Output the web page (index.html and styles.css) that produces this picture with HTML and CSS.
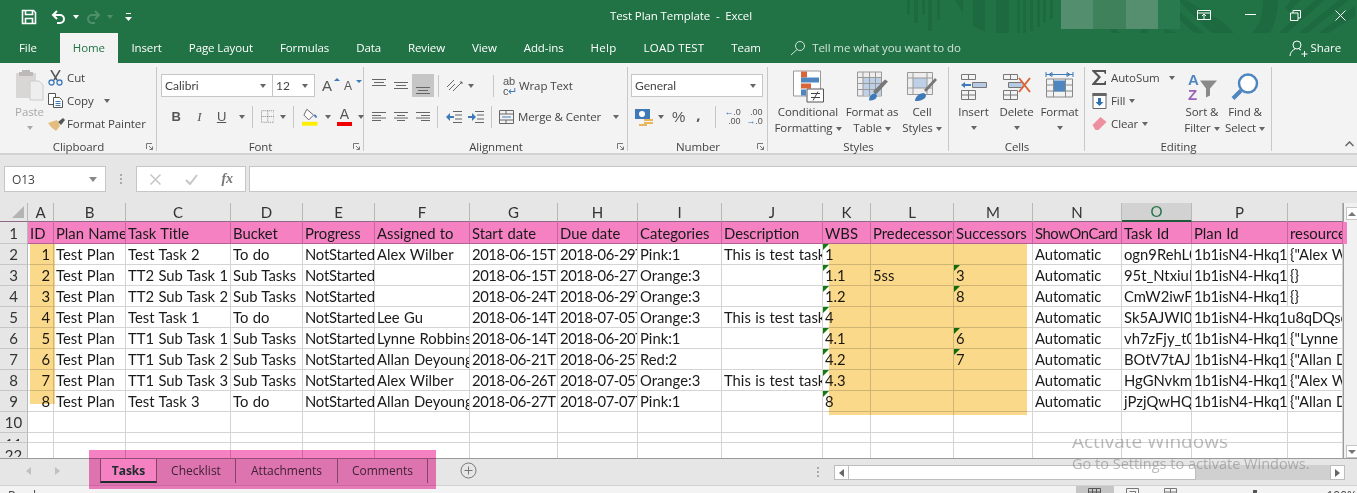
FILE: index.html
```html
<!DOCTYPE html>
<html lang="en">
<head>
    <meta charset="UTF-8">
    <title>Test Plan Template - Excel</title>
    <link rel="stylesheet" href="styles.css">
</head>
<body>
<div class="app">

    <!-- Title bar -->
    <div class="titlebar">
        <svg class="pattern" width="1357" height="63" viewBox="0 0 1357 63" fill="#1d6a40">
            <path d="M907 0h3v15h-3zM914 0h4v23h-4zM922 0h3v15h-3zM928 0h4v31h-4zM937 0h3v20h-3zM955 0l8 13V0zM973 0h12v32l-12-6zM996 0h13v36h-13zM1017 0h3v35h-3zM1023 0h3v33h-3zM1030 0h3v31h-3zM1037 0h3v27h-3zM1043 0h3v23h-3zM1050 0h3v17l-3 3z"/>
            <path d="M1110 28a19 12 0 0 0 38 0h-6a13 7 0 0 1-26 0z"/>
            <path d="M1163 28c6 12 18 22 28 23h58c16-2 29-26 29-51h-15c0 24-10 38-24 38l-15-15-38-23h-8l40 40h-6l-46-40h-8l44 40h-6z"/>
            <path d="M1291 0h10l-12 12-4-4zM1315 0h10l-44 38-4-4zM1339 0h10l-50 40-4-4zM1355 6v10l-34 22-4-4z"/>
        </svg>
        <div class="qat">
            <svg class="qat-save" width="16" height="16" viewBox="0 0 16 16" fill="none" stroke="#fff" stroke-width="1.6"><path d="M1.5 1.5h11l2 2v11h-13z"/><path d="M4.5 1.5v4h7v-4"/><path d="M4.5 14.5v-5h7v5" /></svg>
            <svg class="qat-undo" width="16" height="14" viewBox="0 0 16 14" fill="none" stroke="#fff" stroke-width="2"><path d="M6 1L2 5l4 4"/><path d="M2 5h7a4 4 0 0 1 0 8H6"/></svg>
            <span class="caret caret-white"></span>
            <svg class="qat-redo" width="16" height="14" viewBox="0 0 16 14" fill="none" stroke="#4f8f6b" stroke-width="2"><path d="M10 1l4 4-4 4"/><path d="M14 5H7a4 4 0 0 0 0 8h3"/></svg>
            <span class="caret caret-dim"></span>
            <svg class="qat-more" width="7" height="8" viewBox="0 0 7 8" fill="#fff"><path d="M1 0h5v1H1zM0 4h7L3.5 8z"/></svg>
        </div>
        <div class="doc-title">Test Plan Template&nbsp; -&nbsp; Excel</div>
        <div class="blur-blocks"><i class="b1"></i><i class="b2"></i><i class="b3"></i><i class="b4"></i></div>
        <div class="win-buttons">
            <svg width="14" height="11" viewBox="0 0 14 11" fill="none" stroke="#fff"><path d="M.5.500h13v9H.5zM.5 3h13"/><path d="M7 9V4M5 6l2-2 2 2"/></svg>
            <svg width="11" height="2" viewBox="0 0 11 2" fill="#fff"><path d="M0 0h11v1H0z"/></svg>
            <svg width="11" height="11" viewBox="0 0 11 11" fill="none" stroke="#fff"><path d="M.5 3h7.500v7.500H.5zM3 3V.5h7.500V8H8"/></svg>
            <svg width="11" height="11" viewBox="0 0 11 11" fill="none" stroke="#fff"><path d="M.5.500l10 10M10.500.500l-10 10"/></svg>
        </div>
    </div>

    <!-- Ribbon tabs -->
    <div class="tabs">
        <div class="tab tab-file">File</div>
        <div class="tab tab-active">Home</div>
        <div class="tab">Insert</div>
        <div class="tab">Page Layout</div>
        <div class="tab">Formulas</div>
        <div class="tab">Data</div>
        <div class="tab">Review</div>
        <div class="tab">View</div>
        <div class="tab">Add-ins</div>
        <div class="tab tab-help">Help</div>
        <div class="tab tab-load">LOAD TEST</div>
        <div class="tab">Team</div>
        <div class="tell-me">
            <svg width="16" height="16" viewBox="0 0 16 16" fill="none" stroke="#d3e3da"><circle cx="10" cy="6" r="4.500"/><path d="M7 9.500L1 15"/></svg>
            <span>Tell me what you want to do</span>
        </div>
        <div class="share">
            <svg width="19" height="17" viewBox="0 0 19 17" fill="none" stroke="#fff"><circle cx="8" cy="5" r="4"/><path d="M1 16c0-4 3-6 5-7M10 9l2 1M12.500 14h6M15.500 11v6"/></svg>
            <span>Share</span>
        </div>
    </div>

    <!-- Ribbon -->
    <div class="ribbon">

        <div class="group g-clipboard">
            <div class="group-body">
                <div class="paste">
                    <svg width="29" height="31" viewBox="0 0 29 31"><path d="M1 3h20v25H1z" fill="#d9d6d6"/><path d="M7 0h8v2h3v4H4V2h3z" fill="#bdb9b9"/><path d="M15 11h9l4 4v15H15z" fill="#eee" stroke="#ccc"/></svg>
                    <span class="muted">Paste</span>
                    <span class="caret caret-light"></span>
                </div>
                <div class="small-col">
                    <div class="small-btn"><svg width="15" height="16" viewBox="0 0 15 16" fill="none"><path d="M3 0l6 10M12 0L6 10" stroke="#555" stroke-width="1.500"/><circle cx="3.500" cy="12.500" r="2.500" stroke="#3f7ab8" stroke-width="1.300"/><circle cx="11.500" cy="12.500" r="2.500" stroke="#3f7ab8" stroke-width="1.300"/></svg><span>Cut</span></div>
                    <div class="small-btn"><svg width="15" height="15" viewBox="0 0 15 15" fill="#fff" stroke="#555"><path d="M.5.500h7v11h-7z"/><path d="M5.500 4.500h6l3 3v7h-9z"/><path d="M7.500 8.500h5M7.500 10.500h5M7.500 12.500h5" stroke="#3f7ab8"/></svg><span>Copy</span><span class="caret"></span></div>
                    <div class="small-btn"><svg class="ic-painter" width="17" height="14" viewBox="0 0 17 14"><path d="M0 6l9-3 3 6-4 5C5 12 2 9 0 6z" fill="#e4bd7e"/><path d="M10 5l5-4 2 2-4 5z" fill="#555"/></svg><span>Format Painter</span></div>
                </div>
            </div>
            <div class="group-label">Clipboard<svg class="launcher" width="7" height="7" viewBox="0 0 7 7" fill="none" stroke="#777"><path d="M.500 6V.500H6M3 3l3.500 3.500M6.500 3.500v3h-3"/></svg></div>
        </div>

        <div class="group g-font">
            <div class="group-body col">
                <div class="row r-top">
                    <div class="select select-font">Calibri<span class="caret"></span></div>
                    <div class="select select-size">12<span class="caret"></span></div>
                    <span class="grow-a">A<i class="tip"></i></span>
                    <span class="grow-a small-a">A<i class="tip tip-down"></i></span>
                </div>
                <div class="row r-bottom">
                    <b class="fmt fmt-b">B</b>
                    <i class="fmt fmt-i">I</i>
                    <u class="fmt fmt-u">U</u>
                    <span class="caret"></span>
                    <span class="sep sep-a"></span>
                    <svg class="ic-border" width="14" height="13" viewBox="0 0 14 13" fill="none" stroke="#888" stroke-dasharray="1 1"><path d="M.5.500h13v12H.5zM7 .5v12M.5 6.500h13"/></svg>
                    <span class="caret"></span>
                    <span class="sep sep-b"></span>
                    <svg class="ic-fill" width="17" height="18" viewBox="0 0 17 18"><path d="M5 1l7 6-5 5-5-5z" fill="#fff" stroke="#666"/><path d="M13 6c2 1 3 3 2 4-2 0-3-2-2-4z" fill="#3f7ab8"/><path d="M0 14h16v4H0z" fill="#ffee00"/></svg>
                    <span class="caret"></span>
                    <span class="color-a">A</span>
                    <span class="caret"></span>
                </div>
            </div>
            <div class="group-label">Font<svg class="launcher" width="7" height="7" viewBox="0 0 7 7" fill="none" stroke="#777"><path d="M.500 6V.500H6M3 3l3.500 3.500M6.500 3.500v3h-3"/></svg></div>
        </div>

        <div class="group g-align">
            <div class="group-body col">
                <div class="row r-top">
                    <svg class="al" width="14" height="7" viewBox="0 0 14 7" stroke="#666"><path d="M0 .5h14M2 3.500h10M0 6.500h14" /></svg>
                    <svg class="al al-mid" width="14" height="7" viewBox="0 0 14 7" stroke="#666"><path d="M0 .5h14M2 3.500h10M0 6.500h14" /></svg>
                    <span class="al-on"><svg width="14" height="7" viewBox="0 0 14 7" stroke="#666"><path d="M0 .5h14M2 3.500h10M0 6.500h14" /></svg></span>
                    <span class="sep sep-c"></span>
                    <svg class="ic-orient" width="17" height="15" viewBox="0 0 17 15" fill="none" stroke="#666"><path d="M1 9l7-7M3 12l6-6M7 13L16 4M14 4h2v2" /></svg>
                    <span class="caret"></span>
                    <span class="sep sep-d"></span>
                    <span class="wrap-ic">ab<br>c<em>↵</em></span>
                    <span class="btn-text">Wrap Text</span>
                </div>
                <div class="row r-bottom">
                    <svg class="al al-lo" width="14" height="9" viewBox="0 0 14 9" stroke="#666"><path d="M0 .5h14M0 3.500h9M0 6h14M0 8.500h9"/></svg>
                    <svg class="al al-cn" width="14" height="9" viewBox="0 0 14 9" stroke="#666"><path d="M0 .5h14M3 3.500h8M0 6h14M3 8.500h8"/></svg>
                    <svg class="al al-rt" width="14" height="9" viewBox="0 0 14 9" stroke="#666"><path d="M0 .5h14M5 3.500h9M0 6h14M5 8.500h9"/></svg>
                    <span class="sep sep-e"></span>
                    <svg class="ic-out" width="16" height="12" viewBox="0 0 16 12"><path d="M7 .5h9M9 4h7M9 8h7M7 11.500h9" stroke="#666"/><path d="M0 6l4-4v3h4v2H4v3z" fill="#3f7ab8"/></svg>
                    <svg class="ic-in" width="16" height="12" viewBox="0 0 16 12"><path d="M7 .5h9M9 4h7M9 8h7M7 11.500h9" stroke="#666"/><path d="M8 6L4 2v3H0v2h4v3z" fill="#3f7ab8"/></svg>
                    <span class="sep sep-f"></span>
                    <svg class="ic-merge" width="15" height="14" viewBox="0 0 15 14" fill="none" stroke="#666"><path d="M.5.500h14v13H.5zM.5 4h14M.5 10h14M7 .5V4M7 10v3.500"/><path d="M3 7h9" stroke="#3f7ab8"/></svg>
                    <span class="btn-text">Merge &amp; Center</span>
                    <span class="caret caret-merge"></span>
                </div>
            </div>
            <div class="group-label">Alignment<svg class="launcher" width="7" height="7" viewBox="0 0 7 7" fill="none" stroke="#777"><path d="M.500 6V.500H6M3 3l3.500 3.500M6.500 3.500v3h-3"/></svg></div>
        </div>

        <div class="group g-number">
            <div class="group-body col">
                <div class="row r-top">
                    <div class="select select-format">General<span class="caret"></span></div>
                </div>
                <div class="row r-bottom">
                    <svg class="ic-money" width="18" height="18" viewBox="0 0 18 18"><path d="M0 1h15v10H0z" fill="#3f7ab8"/><circle cx="7" cy="6" r="3" fill="#fff"/><path d="M9 11h9v2H9zM9 14h9v2H9z" fill="#e8b65c"/><path d="M4 16h8v2H4z" fill="#e8b65c"/></svg>
                    <span class="caret"></span>
                    <span class="pct">%</span>
                    <span class="comma">,</span>
                    <span class="sep sep-g"></span>
                    <span class="dec dec-1"><em>←</em>.0<br>.00</span>
                    <span class="dec dec-2">.00<br><em>→</em>.0</span>
                </div>
            </div>
            <div class="group-label">Number<svg class="launcher" width="7" height="7" viewBox="0 0 7 7" fill="none" stroke="#777"><path d="M.500 6V.500H6M3 3l3.500 3.500M6.500 3.500v3h-3"/></svg></div>
        </div>

        <div class="group g-styles">
            <div class="group-body">
                <div class="big big-cond">
                    <svg width="31" height="32" viewBox="0 0 31 32"><path d="M.5.500h27v25H.5z" fill="#fff" stroke="#999"/><path d="M8 1h6v6H8z" fill="#d9653b"/><path d="M8 7h18v5H8z" fill="#4f86c0"/><path d="M8 13h10v5H8z" fill="#d9653b"/><path d="M8 19h5v6H8z" fill="#4f86c0"/><path d="M14 18.500h16.500v13H14z" fill="#fff" stroke="#555"/><path d="M18 23h9M18 27h9M25 21l-5 9" stroke="#444" fill="none"/></svg>
                    <span>Conditional</span>
                    <span>Formatting<i class="caret"></i></span>
                </div>
                <div class="big big-table">
                    <svg width="31" height="30" viewBox="0 0 31 30"><path d="M.5.500h24v24H.5z" fill="#eee" stroke="#999"/><path d="M6 6h18v18H6z" fill="#bdd0e8"/><path d="M6 .5v24M12.500 .5v24M18.500 .5v24M.5 6h24M.5 12h24M.5 18h24" stroke="#999" fill="none"/><path d="M16 20L28 8l3 2-12 13z" fill="#777"/><path d="M12 29c0-5 3-7 6-7l2 2c0 3-3 5-8 5z" fill="#3f7ab8"/></svg>
                    <span>Format as</span>
                    <span>Table<i class="caret"></i></span>
                </div>
                <div class="big big-cell">
                    <svg width="30" height="29" viewBox="0 0 30 29"><path d="M.5.500h25v22H.5z" fill="#eee" stroke="#999"/><path d="M6 6h14v10H6z" fill="#bdd0e8"/><path d="M.5 6h25M.5 16h25M6 .5v22M20 .5v22" stroke="#999" fill="none"/><path d="M17 18L28 6l2 2-11 12z" fill="#777"/><path d="M8 29c0-4 4-8 9-8l2 2c0 4-5 6-11 6z" fill="#3f7ab8"/></svg>
                    <span>Cell</span>
                    <span>Styles<i class="caret"></i></span>
                </div>
            </div>
            <div class="group-label">Styles</div>
        </div>

        <div class="group g-cells">
            <div class="group-body">
                <div class="big big-cellbtn">
                    <svg width="27" height="27" viewBox="0 0 27 27" fill="none"><path d="M1.500 1.500h14v5h-14zM8.500 1.500v5M1.500 17.500h14v9h-14zM1.500 22h14M8.500 17.500v9" stroke="#777"/><path d="M12.500 9.500h14v5h-14zM19.500 9.500v5" stroke="#777" /><path d="M13 10h13v4H13z" fill="#b5cbe4"/><path d="M1 12l4-3v2h6v2H5v2z" fill="#3f7ab8"/></svg>
                    <span>Insert</span>
                    <i class="caret caret-alone"></i>
                </div>
                <div class="big big-cellbtn">
                    <svg width="30" height="27" viewBox="0 0 30 27" fill="none"><path d="M1.500 1.500h14v5h-14zM8.500 1.500v5M1.500 17.500h14v9h-14zM1.500 22h14M8.500 17.500v9M6.500 9.500h14v5h-14z" stroke="#777"/><path d="M7 10h12l3 2-3 2H7z" fill="#b5cbe4"/><path d="M17 5l11 14M28 5L17 19" stroke="#d9653b" stroke-width="2"/></svg>
                    <span>Delete</span>
                    <i class="caret caret-alone"></i>
                </div>
                <div class="big big-cellbtn">
                    <svg width="29" height="30" viewBox="0 0 29 30" fill="none"><path d="M1 3h27M1 .5v5M28 .5v5M4 3l3-2v4zM25 3l-3-2v4z" stroke="#3f7ab8"/><path d="M1.500 7.500h26v18h-26z" stroke="#888"/><path d="M1.500 13.500h26M1.500 19.500h26M8.500 7.500v18M20.500 7.500v18" stroke="#888"/><path d="M9 9h11v11H9z" fill="#4f86c0"/></svg>
                    <span>Format</span>
                    <i class="caret caret-alone"></i>
                </div>
            </div>
            <div class="group-label">Cells</div>
        </div>

        <div class="group g-editing">
            <div class="group-body">
                <div class="small-col edit-col">
                    <div class="small-btn"><svg width="15" height="15" viewBox="0 0 15 15" fill="#555"><path d="M0 0h14v4h-1l-1-2H4l5 5-5 6h8l1-2h1v4H0v-1l6-7-6-6z"/></svg><span>AutoSum</span><span class="caret caret-sum"></span></div>
                    <div class="small-btn"><svg width="15" height="16" viewBox="0 0 14 16"><path d="M.5 .5h13v15H.5z" fill="#fff" stroke="#666"/><path d="M0 0h14v3H0z" fill="#666"/><path d="M5.500 5h3v4H11l-4 4-4-4h2.500z" fill="#2f6fb3"/></svg><span>Fill</span><span class="caret"></span></div>
                    <div class="small-btn"><svg width="15" height="13" viewBox="0 0 14 13"><path d="M0 8l8-8 6 5-8 8H3z" fill="#ee8f9f"/></svg><span>Clear</span><span class="caret"></span></div>
                </div>
                <div class="big big-sort">
                    <svg width="31" height="30" viewBox="0 0 31 30"><text x="1" y="13" class="az az-a">A</text><text x="1" y="28" class="az az-z">Z</text><path d="M13 9h17l-7 8v7l-4 2v-9z" fill="#8a8a8a"/></svg>
                    <span>Sort &amp;</span>
                    <span>Filter<i class="caret"></i></span>
                </div>
                <div class="big big-find">
                    <svg width="28" height="28" viewBox="0 0 28 28" fill="none"><circle cx="17" cy="11" r="9" stroke="#4f86c0" stroke-width="2.500" fill="#fff"/><path d="M10 18l-8 8" stroke="#4f86c0" stroke-width="4"/></svg>
                    <span>Find &amp;</span>
                    <span>Select<i class="caret"></i></span>
                </div>
            </div>
            <div class="group-label">Editing</div>
        </div>

        <svg class="collapse" width="9" height="6" viewBox="0 0 9 6" fill="none" stroke="#666" stroke-width="1.500"><path d="M.5 5l4-4 4 4"/></svg>
    </div>

    <!-- Formula bar -->
    <div class="formula-bar">
        <div class="name-box">O13<span class="caret caret-name"></span></div>
        <span class="fb-dots"></span>
        <div class="fb-buttons">
            <svg width="11" height="11" viewBox="0 0 11 11" stroke="#c6c6c6" stroke-width="1.500"><path d="M.5.500l10 10M10.500.500l-10 10"/></svg>
            <svg width="13" height="11" viewBox="0 0 13 11" fill="none" stroke="#c6c6c6" stroke-width="2"><path d="M1 6l4 4 7-9"/></svg>
            <span class="fx">fx</span>
        </div>
        <div class="fb-input"></div>
    </div>

    <!-- Sheet -->
    <div class="sheet">
        <table class="grid">
            <colgroup>
                <col class="c-rh"><col class="c-a"><col class="c-b"><col class="c-c"><col class="c-d"><col class="c-e"><col class="c-f"><col class="c-g"><col class="c-h"><col class="c-i"><col class="c-j"><col class="c-k"><col class="c-l"><col class="c-m"><col class="c-n"><col class="c-o"><col class="c-p"><col class="c-q">
            </colgroup>
            <tr class="letters">
                <th class="corner"></th><th>A</th><th>B</th><th>C</th><th>D</th><th>E</th><th>F</th><th>G</th><th>H</th><th>I</th><th>J</th><th>K</th><th>L</th><th>M</th><th>N</th><th class="col-on">O</th><th>P</th><th></th>
            </tr>
            <tr class="head">
                <th>1</th><td>ID</td><td>Plan Name</td><td>Task Title</td><td>Bucket</td><td>Progress</td><td>Assigned to</td><td>Start date</td><td>Due date</td><td>Categories</td><td>Description</td><td>WBS</td><td>Predecessors</td><td>Successors</td><td>ShowOnCard</td><td>Task Id</td><td>Plan Id</td><td>resources</td>
            </tr>
            <tr>
                <th>2</th><td class="num">1</td><td>Test Plan</td><td>Test Task 2</td><td>To do</td><td>NotStarted</td><td>Alex Wilber</td><td>2018-06-15T12:00</td><td>2018-06-29T12:00</td><td>Pink:1</td><td>This is test task</td><td class="flag">1</td><td></td><td></td><td>Automatic</td><td>ogn9RehL0abc</td><td>1b1isN4-Hkq1</td><td>{"Alex Wilber"}</td>
            </tr>
            <tr>
                <th>3</th><td class="num">2</td><td>Test Plan</td><td>TT2 Sub Task 1</td><td>Sub Tasks</td><td>NotStarted</td><td></td><td>2018-06-15T12:00</td><td>2018-06-27T12:00</td><td>Orange:3</td><td></td><td class="flag">1.1</td><td>5ss</td><td class="flag">3</td><td>Automatic</td><td>95t_NtxiuBabc</td><td>1b1isN4-Hkq1</td><td>{}</td>
            </tr>
            <tr>
                <th>4</th><td class="num">3</td><td>Test Plan</td><td>TT2 Sub Task 2</td><td>Sub Tasks</td><td>NotStarted</td><td></td><td>2018-06-24T12:00</td><td>2018-06-29T12:00</td><td>Orange:3</td><td></td><td class="flag">1.2</td><td></td><td class="flag">8</td><td>Automatic</td><td>CmW2iwFAabc</td><td>1b1isN4-Hkq1</td><td>{}</td>
            </tr>
            <tr>
                <th>5</th><td class="num">4</td><td>Test Plan</td><td>Test Task 1</td><td>To do</td><td>NotStarted</td><td>Lee Gu</td><td>2018-06-14T12:00</td><td>2018-07-05T12:00</td><td>Orange:3</td><td>This is test task</td><td class="flag">4</td><td></td><td></td><td>Automatic</td><td>Sk5AJWI0kabc</td><td colspan="2">1b1isN4-Hkq1u8qDQsc</td>
            </tr>
            <tr>
                <th>6</th><td class="num">5</td><td>Test Plan</td><td>TT1 Sub Task 1</td><td>Sub Tasks</td><td>NotStarted</td><td>Lynne Robbins</td><td>2018-06-14T12:00</td><td>2018-06-20T12:00</td><td>Pink:1</td><td></td><td class="flag">4.1</td><td></td><td class="flag">6</td><td>Automatic</td><td>vh7zFjy_t0abc</td><td>1b1isN4-Hkq1</td><td>{"Lynne</td>
            </tr>
            <tr>
                <th>7</th><td class="num">6</td><td>Test Plan</td><td>TT1 Sub Task 2</td><td>Sub Tasks</td><td>NotStarted</td><td>Allan Deyoung</td><td>2018-06-21T12:00</td><td>2018-06-25T12:00</td><td>Red:2</td><td></td><td class="flag">4.2</td><td></td><td class="flag">7</td><td>Automatic</td><td>BOtV7tAJMabc</td><td>1b1isN4-Hkq1</td><td>{"Allan De"}</td>
            </tr>
            <tr>
                <th>8</th><td class="num">7</td><td>Test Plan</td><td>TT1 Sub Task 3</td><td>Sub Tasks</td><td>NotStarted</td><td>Alex Wilber</td><td>2018-06-26T12:00</td><td>2018-07-05T12:00</td><td>Orange:3</td><td>This is test task</td><td class="flag">4.3</td><td></td><td></td><td>Automatic</td><td>HgGNvkm0abc</td><td>1b1isN4-Hkq1</td><td>{"Alex Wilber"}</td>
            </tr>
            <tr>
                <th>9</th><td class="num">8</td><td>Test Plan</td><td>Test Task 3</td><td>To do</td><td>NotStarted</td><td>Allan Deyoung</td><td>2018-06-27T12:00</td><td>2018-07-07T12:00</td><td>Pink:1</td><td></td><td class="flag">8</td><td></td><td></td><td>Automatic</td><td>jPzjQwHQ_abc</td><td>1b1isN4-Hkq1</td><td>{"Allan De"}</td>
            </tr>
            <tr>
                <th>10</th><td></td><td></td><td></td><td></td><td></td><td></td><td></td><td></td><td></td><td></td><td></td><td></td><td></td><td></td><td></td><td></td><td></td>
            </tr>
            <tr class="row-thin">
                <th><span>11</span></th><td></td><td></td><td></td><td></td><td></td><td></td><td></td><td></td><td></td><td></td><td></td><td></td><td></td><td></td><td></td><td></td><td></td>
            </tr>
            <tr class="row-cut">
                <th><span>22</span></th><td></td><td></td><td></td><td></td><td></td><td></td><td></td><td></td><td></td><td></td><td></td><td></td><td></td><td></td><td></td><td></td><td></td>
            </tr>
        </table>
        <div class="vscroll">
            <span class="vs-btn"><i class="tri-up"></i></span>
            <span class="vs-btn"><i class="tri-down"></i></span>
        </div>
        <span class="head-tail"></span>
    </div>

    <!-- Sheet tabs and horizontal scrollbar -->
    <div class="sheet-bar">
        <div class="sheet-nav"><i class="tri-left"></i><i class="tri-right"></i></div>
        <div class="sheet-tab sheet-tab-on">Tasks</div>
        <div class="sheet-tab st-check">Checklist</div>
        <div class="sheet-tab st-attach">Attachments</div>
        <div class="sheet-tab st-comments">Comments</div>
        <svg class="add-sheet" width="17" height="17" viewBox="0 0 17 17" fill="none" stroke="#777"><circle cx="8.500" cy="8.500" r="7.500"/><path d="M8.500 4.500v8M4.500 8.500h8"/></svg>
        <span class="hs-dots"></span>
        <div class="hscroll">
            <span class="hs-btn"><i class="tri-left dark"></i></span>
            <span class="hs-thumb"></span>
            <span class="hs-track"></span>
            <span class="hs-btn"><i class="tri-right dark"></i></span>
        </div>
    </div>

    <!-- Status bar, cut by the bottom of the window -->
    <div class="status">
        <span class="ready">Ready</span>
        <span class="view view-on"><svg width="13" height="8" viewBox="0 0 13 8" fill="none" stroke="#555"><path d="M.5 8V.5h12V8M4.500 .5V8M8.500 .5V8M.5 4h12"/></svg></span>
        <span class="view"><svg width="13" height="8" viewBox="0 0 13 8" fill="none" stroke="#777"><path d="M.5 8V.5h12V8M3.500 3.500h6V8"/></svg></span>
        <span class="view"><svg width="13" height="8" viewBox="0 0 13 8" fill="none" stroke="#777"><path d="M.5 8V.5h12V8M6.500 .5V8M.5 4h12"/></svg></span>
        <span class="zoom-knob"></span>
        <span class="zoom-pct">100%</span>
    </div>

    <!-- Highlights painted on the screenshot -->
    <div class="mark mark-id"></div>
    <div class="mark mark-links"></div>
    <div class="mark-tabs"></div>

    <div class="activate">
        <div class="act-1">Activate Windows</div>
        <div class="act-2">Go to Settings to activate Windows.</div>
    </div>
</div>
</body>
</html>
```

FILE: styles.css
```css
* {
    box-sizing: border-box;
}

html, body {
    margin: 0;
    padding: 0;
}

body {
    font-family: 'Open Sans', 'Noto Sans', sans-serif;
    font-size: 11.5px;
    letter-spacing: -0.1px;
    color: #333;
    background-color: #e6e6e6;
}

.app {
    position: relative;
    width: 1357px;
    height: 493px;
    overflow: hidden;
    display: flex;
    flex-direction: column;
}

/* small dropdown arrow, used everywhere */
.caret {
    display: inline-block;
    width: 0;
    height: 0;
    border-left: 3.5px solid transparent;
    border-right: 3.5px solid transparent;
    border-top: 4px solid #666;
    vertical-align: middle;
}

.caret-white { border-top-color: #fff; }
.caret-dim { border-top-color: #4f8f6b; }
.caret-light { border-top-color: #aaa; }

/* Title bar */
.titlebar {
    position: relative;
    height: 33px;
    flex: none;
    background-color: #217346;
    display: flex;
    align-items: center;
    color: #fff;
}

.pattern {
    position: absolute;
    top: 0;
    left: 0;
}

.qat {
    position: relative;
    display: flex;
    align-items: center;
    padding-left: 21px;
    width: 400px;
    height: 31px;
}

.qat-undo { margin-left: 14px; }
.qat .caret-white { margin-left: 6px; }
.qat-redo { margin-left: 6px; }
.qat .caret-dim { margin-left: 6px; }
.qat-more { margin-left: 12px; }

.doc-title {
    position: relative;
    width: 562px;
    text-align: center;
    margin-top: -3px;
}

.blur-blocks {
    position: relative;
    display: flex;
    margin-left: 99px;
    align-self: flex-start;
    height: 29px;
}

.blur-blocks i {
    display: block;
    height: 29px;
}

.b1 { width: 32px; background-color: #538f6e; }
.b2 { width: 33px; background-color: #3f815b; }
.b3 { width: 32px; background-color: #568f70; }
.b4 { width: 22px; background-color: #2a7a4f; }

.win-buttons {
    position: relative;
    display: flex;
    align-items: center;
    gap: 34px;
    margin-left: 17px;
    margin-top: -3px;
}

/* Ribbon tabs */
.tabs {
    position: relative;
    height: 30px;
    flex: none;
    background-color: #217346;
    display: flex;
    color: #fff;
    line-height: 30px;
}

.tab {
    padding: 0 13.5px;
}

.tab-file {
    padding: 0 23px 0 19px;
}

.tab-active {
    background-color: #f3f3f3;
    color: #217346;
    padding: 0 13px;
}

.tab-help {
    letter-spacing: 0.3px;
}

.tab-load {
    letter-spacing: 0.2px;
}

.tell-me {
    display: flex;
    align-items: center;
    gap: 6px;
    margin-left: 16px;
    color: #d3e3da;
}

.share {
    display: flex;
    align-items: center;
    gap: 3px;
    margin-left: auto;
    padding-right: 16px;
}

/* Ribbon */
.ribbon {
    position: relative;
    height: 92px;
    flex: none;
    background-color: #f3f3f3;
    border-bottom: 2px solid #d2d2d2;
    display: flex;
    color: #444;
}

/* the group divider stops above the bottom of the group */
.group {
    display: flex;
    flex-direction: column;
    flex: none;
    height: 87px;
    margin-top: 4px;
    background: linear-gradient(#c8c8c8, #c8c8c8) right top / 1px 84px no-repeat;
}

.g-clipboard { width: 157px; }
.g-font { width: 207px; }
.g-align { width: 264px; }
.g-number { width: 140px; }
.g-styles { width: 181px; }
.g-cells { width: 136px; }
.g-editing { width: 187px; }

.group-body {
    flex: 1;
    display: flex;
    min-height: 0;
}

.group-body.col {
    flex-direction: column;
    padding-top: 7px;
}

.group-label {
    position: relative;
    height: 17px;
    line-height: 19px;
    text-align: center;
    color: #444;
}

.launcher {
    position: absolute;
    right: 4px;
    top: 6px;
}

.muted { color: #a8a8a8; }

.paste {
    width: 48px;
    padding-left: 11px;
    padding-top: 3px;
    display: flex;
    flex-direction: column;
    align-items: center;
}

.paste .muted {
    margin-top: 3px;
}

.paste .caret {
    margin-top: 7px;
}

.small-col {
    display: flex;
    flex-direction: column;
    margin-top: -1px;
}

.small-btn {
    display: flex;
    align-items: center;
    gap: 4px;
    height: 23px;
    white-space: nowrap;
}

.small-btn svg {
    flex: none;
}

.ic-painter {
    margin-right: -2px;
}

.small-btn .caret {
    margin-left: 6px;
}

.row {
    display: flex;
    align-items: center;
    height: 23px;
}

.r-bottom {
    margin-top: 8px;
}

.select {
    display: flex;
    align-items: center;
    justify-content: space-between;
    height: 23px;
    background-color: #fff;
    border: 1px solid #c6c6c6;
    padding: 0 6px 0 3px;
    color: #444;
    font-size: 12px;
    letter-spacing: 0;
}

.select-font {
    width: 112px;
    margin-left: 4px;
    font-family: 'Lato', sans-serif;
}

.select-size {
    width: 43px;
    margin-left: -1px;
    font-family: 'Lato', sans-serif;
}

.grow-a {
    position: relative;
    margin-left: 7px;
    width: 16px;
    font-size: 15px;
    font-family: 'Liberation Sans', sans-serif;
    color: #555;
}

.small-a {
    margin-left: 6px;
    font-size: 12px;
}

.tip {
    position: absolute;
    top: 1px;
    right: -2px;
    border-left: 3px solid transparent;
    border-right: 3px solid transparent;
    border-bottom: 3px solid #3f7ab8;
}

.tip-down {
    border-bottom: none;
    border-top: 3px solid #3f7ab8;
}

.fmt {
    font-family: 'Liberation Serif', serif;
    font-size: 13px;
    color: #555;
    width: 23px;
    text-align: center;
}

.fmt-b { font-family: 'Liberation Sans', sans-serif; margin-left: 8px; }
.fmt-i { margin-left: 1px; }
.fmt-u { font-family: 'Liberation Sans', sans-serif; }

.g-font .r-bottom .caret { margin-left: 6px; }

.sep {
    display: block;
    width: 1px;
    height: 22px;
    background-color: #c6c6c6;
}

.sep-a { margin-left: 7px; }
.ic-border { margin-left: 8px; }
.sep-b { margin-left: 7px; }
.ic-fill { margin-left: 8px; }

.color-a {
    margin-left: 6px;
    width: 16px;
    height: 18px;
    line-height: 13px;
    text-align: center;
    font-family: 'Liberation Sans', sans-serif;
    font-size: 14px;
    color: #555;
    border-bottom: 4px solid #f00000;
}

.al { margin-left: 8px; flex: none; }
.al-mid { margin-left: 8px; }
.g-align .r-top .al:first-child { margin-top: -7px; }
.al-on {
    display: flex;
    align-items: flex-end;
    justify-content: center;
    width: 22px;
    height: 23px;
    margin-left: 4px;
    padding-bottom: 3px;
    background-color: #c6c6c6;
}

.sep-c { margin-left: 4px; margin-right: 7px; }
.ic-orient + .caret { margin-left: 5px; }
.sep-d { margin-left: 19px; margin-right: 9px; }

.wrap-ic {
    width: 13px;
    font-family: 'Liberation Sans', sans-serif;
    font-size: 11px;
    line-height: 10px;
    color: #555;
}

.wrap-ic em {
    font-style: normal;
    color: #3f7ab8;
}

.btn-text {
    margin-left: 4px;
    white-space: nowrap;
}

.wrap-ic + .btn-text {
    margin-left: 3px;
}

.g-align .r-bottom .al { margin-left: 8px; }
.al-cn { margin-left: 8px !important; }
.al-rt { margin-left: 8px !important; }
.sep-e { margin-left: 7px; margin-right: 8px; }
.ic-in { margin-left: 6px; }
.sep-f { margin-left: 7px; margin-right: 7px; }
.ic-merge + .btn-text { margin-left: 4px; }
.caret-merge { margin-left: 12px; }

.select-format {
    width: 132px;
    margin-left: 3px;
    font-family: 'Lato', sans-serif;
}

.ic-money { margin-left: 7px; }
.g-number .r-bottom .caret { margin-left: 5px; }

.pct {
    margin-left: 8px;
    font-size: 15px;
    color: #555;
    font-family: 'Liberation Sans', sans-serif;
}

.comma {
    margin-left: 11px;
    font-size: 15px;
    font-weight: bold;
    color: #555;
    margin-top: -6px;
}

.sep-g { margin-left: 15px; }

.dec {
    width: 16px;
    margin-left: 8px;
    font-family: 'Liberation Sans', sans-serif;
    font-size: 9px;
    line-height: 9px;
    text-align: right;
    color: #555;
}

.dec em {
    font-style: normal;
    color: #2f6fb3;
    font-weight: bold;
}

.dec-2 { margin-left: 6px; }

/* big ribbon buttons: icon on top, one or two lines of text under it */
.big {
    display: flex;
    flex-direction: column;
    align-items: center;
    line-height: 16px;
    white-space: nowrap;
    padding-top: 3px;
    flex: none;
}

.big svg {
    flex: none;
    height: 33px;
    margin-bottom: 1px;
}

.big .caret {
    margin-left: 3px;
}

.big .caret-alone {
    margin: 6px 0 0;
}

.big-cond { width: 78px; margin-left: 1px; }
.big-table { width: 50px; }
.big-cell { width: 50px; }
.big-cellbtn { width: 43px; }
.g-cells .group-body { padding-left: 3px; }

.edit-col {
    width: 92px;
    padding-left: 7px;
}

.edit-col .small-btn .caret {
    margin-left: 0;
}

.edit-col .small-btn .caret-sum {
    margin-left: 5px;
}

.big-sort { width: 42px; margin-left: 4px; }
.big-find { width: 44px; }

.az {
    font-family: 'Liberation Sans', sans-serif;
    font-size: 15px;
    font-weight: bold;
}

.az-a { fill: #4f86c0; }
.az-z { fill: #9a63b8; }

.collapse {
    position: absolute;
    right: 3px;
    bottom: 6px;
}

/* Formula bar */
.formula-bar {
    height: 48px;
    flex: none;
    background-color: #e6e6e6;
    display: flex;
    align-items: flex-start;
    padding: 11px 0 0 4px;
}

.name-box {
    display: flex;
    align-items: center;
    justify-content: space-between;
    width: 102px;
    height: 26px;
    background-color: #fff;
    border: 1px solid #c6c6c6;
    padding: 0 8px 0 7px;
    font-size: 12px;
    color: #444;
}

.caret-name {
    border-left-width: 4px;
    border-right-width: 4px;
    border-top-width: 5px;
    border-top-color: #888;
}

.fb-dots {
    width: 2px;
    height: 10px;
    margin: 8px 14px 0 14px;
    background-image: linear-gradient(#aaa 2px, transparent 2px);
    background-size: 2px 4px;
}

.fb-buttons {
    display: flex;
    align-items: center;
    justify-content: space-between;
    width: 110px;
    height: 26px;
    padding: 0 12px 0 13px;
    background-color: #fff;
    border: 1px solid #c6c6c6;
}

.fx {
    font-family: 'Liberation Serif', serif;
    font-style: italic;
    font-weight: bold;
    font-size: 14px;
    color: #777;
}

.fb-input {
    flex: 1;
    height: 26px;
    margin-left: 3px;
    background-color: #fff;
    border: 1px solid #c6c6c6;
    border-right: none;
}

/* Sheet */
.sheet {
    position: relative;
    height: 255px;
    flex: none;
    display: flex;
    overflow: hidden;
    background-color: #fff;
}

.grid {
    table-layout: fixed;
    border-collapse: separate;
    border-spacing: 0;
    width: 1343px;
    flex: none;
    font-family: 'Lato', sans-serif;
    font-size: 14.8px;
    letter-spacing: 0;
    word-spacing: 0.6px;
    color: #1a1a1a;
    background-color: #fff;
    border-right: 1px solid #9a9a9a;
}

.c-rh { width: 28px; }
.c-a { width: 26px; }
.c-b { width: 72px; }
.c-c { width: 105px; }
.c-d { width: 72px; }
.c-e { width: 72px; }
.c-f { width: 95px; }
.c-g { width: 88px; }
.c-h { width: 80px; }
.c-i { width: 84px; }
.c-j { width: 101px; }
.c-k { width: 48px; }
.c-l { width: 83px; }
.c-m { width: 79px; }
.c-n { width: 89px; }
.c-o { width: 70px; }
.c-p { width: 96px; }
.c-q { width: 55px; }

.grid tr {
    height: 21px;
}

.grid td {
    position: relative;
    height: 21px;
    padding: 0 0 0 2px;
    overflow: hidden;
    white-space: nowrap;
    border-right: 1px solid #d4d4d4;
    border-bottom: 1px solid #d4d4d4;
}

/* Lato digits and caps run wider than the sheet's own font */
.grid td:nth-child(6) {
    letter-spacing: -0.2px;
}

.grid td:nth-child(8),
.grid td:nth-child(9) {
    letter-spacing: -0.45px;
}

.grid td:nth-child(15) {
    letter-spacing: -0.1px;
}

.grid td:nth-child(17) {
    letter-spacing: -0.2px;
}

.grid .head td {
    letter-spacing: 0;
}

.grid .head td:nth-child(15) {
    letter-spacing: -0.4px;
}

.grid th {
    background-color: #e6e6e6;
    font-weight: normal;
    padding: 0;
    text-align: center;
    color: #333;
    font-size: 15px;
    border-right: 1px solid #b8b8b8;
    border-bottom: 1px solid #c6c6c6;
}

.grid td.num {
    text-align: right;
    padding-right: 3px;
}

.grid .letters {
    height: 19px;
}

.grid .letters th {
    height: 19px;
    line-height: 17px;
    border-bottom: 1px solid #8f6a85;
}

.corner {
    position: relative;
}

.corner::after {
    content: "";
    position: absolute;
    right: 3px;
    bottom: 3px;
    border-left: 12px solid transparent;
    border-bottom: 12px solid #b4b4b4;
}

.grid th.col-on {
    background-color: #d2d2d2;
    color: #217346;
    border-bottom: 2px solid #1f5a3a;
}

.grid .head {
    height: 22px;
}

.grid .head td {
    height: 22px;
    background-color: #f580c2;
    border-right-color: #c467a0;
    border-bottom: 1px solid #b2608f;
}

.grid .row-thin,
.grid .row-thin td,
.grid .row-thin th {
    height: 10px;
    line-height: 0;
}

.row-thin th span {
    display: block;
    height: 7px;
    padding-top: 2px;
    line-height: 16px;
    overflow: hidden;
}

.grid .row-cut td,
.grid .row-cut th {
    height: 16px;
    border-bottom: none;
    overflow: hidden;
    vertical-align: top;
}

.row-cut th span {
    display: block;
    height: 14px;
    padding-top: 4px;
    line-height: 16px;
    overflow: hidden;
}

.flag::before {
    content: "";
    position: absolute;
    top: 0;
    left: 0;
    border-top: 6px solid #107c10;
    border-right: 6px solid transparent;
}

.vscroll {
    flex: 1;
    display: flex;
    flex-direction: column;
    justify-content: space-between;
    align-items: flex-end;
    padding: 4px 0 0;
    background-color: #f1f1f1;
}

.vs-btn {
    display: flex;
    align-items: center;
    justify-content: center;
    width: 11px;
    height: 13px;
    background-color: #fff;
    border: 1px solid #c6c6c6;
    border-right: none;
}

.tri-up, .tri-down, .tri-left, .tri-right {
    display: inline-block;
    width: 0;
    height: 0;
    border-style: solid;
    border-color: transparent;
}

.tri-up { border-width: 0 4px 4px; border-bottom-color: #777; }
.tri-down { border-width: 4px 4px 0; border-top-color: #777; }
.tri-left { border-width: 4px 5px 4px 0; border-right-color: #c0c0c0; }
.tri-right { border-width: 4px 0 4px 5px; border-left-color: #c0c0c0; }
.tri-left.dark { border-right-color: #666; }
.tri-right.dark { border-left-color: #666; }

.head-tail {
    position: absolute;
    left: 1343px;
    top: 19px;
    width: 4px;
    height: 22px;
    background-color: #f580c2;
}

/* Sheet tabs */
.sheet-bar {
    height: 27px;
    flex: none;
    display: flex;
    background-color: #e6e6e6;
    border-top: 1px solid #9a9a9a;
    color: #444;
    font-size: 12px;
    letter-spacing: 0;
}

.sheet-nav {
    width: 100px;
    padding: 8px 0 0 26px;
    display: flex;
    gap: 24px;
    align-items: flex-start;
}

.sheet-tab {
    height: 24px;
    line-height: 24px;
    text-align: center;
    border-right: 1px solid #8a8a8a;
}

.sheet-tab-on {
    width: 57px;
    background-color: #fff;
    font-weight: bold;
    color: #1e5a3c;
    border-left: 1px solid #8a8a8a;
    border-right: 1px solid #8a8a8a;
    border-bottom: 2px solid #1e5a3c;
}

.st-check { width: 79px; }
.st-attach { width: 102px; }
.st-comments { width: 90px; }

.add-sheet {
    margin: 3px 0 0 32px;
}

.hs-dots {
    width: 2px;
    height: 10px;
    margin: 8px 14px 0 340px;
    background-image: linear-gradient(#aaa 2px, transparent 2px);
    background-size: 2px 4px;
}

.hscroll {
    display: flex;
    height: 15px;
    margin: 6px 0 0 1px;
    background-color: #d0d0d0;
}

.hs-btn {
    display: flex;
    align-items: center;
    justify-content: center;
    width: 15px;
    background-color: #fff;
    border: 1px solid #bdbdbd;
}

.hs-thumb {
    width: 347px;
    background-color: #fff;
    border: 1px solid #bdbdbd;
    border-left: none;
}

.hs-track {
    width: 134px;
}

/* Status bar */
.status {
    flex: 1;
    position: relative;
    background-color: #f3f3f3;
    border-top: 1px solid #d2d2d2;
    display: flex;
    align-items: flex-start;
    overflow: hidden;
    font-size: 12px;
    letter-spacing: 0;
    line-height: 16px;
    color: #444;
}

.ready {
    width: 1079px;
    padding-left: 8px;
    margin-top: 2px;
}

.view {
    width: 38px;
    height: 12px;
    text-align: center;
    padding-top: 2px;
}

.view svg {
    display: block;
    margin: 0 auto;
}

.view-on {
    background-color: #c6c6c6;
}

.zoom-knob {
    width: 5px;
    height: 6px;
    margin: 4px 0 0 63px;
    background-color: #555;
}

.zoom-pct {
    margin: 2px 0 0 69px;
}

/* Highlights: multiply so the grid shows through */
.mark {
    position: absolute;
    background-color: #fbd98a;
    mix-blend-mode: multiply;
}

.mark-id {
    left: 30px;
    top: 244px;
    width: 25px;
    height: 160px;
}

.mark-links {
    left: 829px;
    top: 244px;
    width: 198px;
    height: 171px;
}

.mark-tabs {
    position: absolute;
    left: 89px;
    top: 450px;
    width: 347px;
    height: 39px;
    background-color: #f580c2;
    mix-blend-mode: multiply;
}

/* Windows watermark, its first line is cut off */
.activate {
    position: absolute;
    left: 1072px;
    top: 439px;
    height: 38px;
    overflow: hidden;
    color: rgba(120, 120, 120, 0.5);
    white-space: nowrap;
    letter-spacing: 0;
}

.act-1 {
    font-size: 19px;
    line-height: 14px;
    margin-top: -5px;
}

.act-2 {
    font-size: 14.5px;
    line-height: 18px;
    margin-top: 7px;
}
```
